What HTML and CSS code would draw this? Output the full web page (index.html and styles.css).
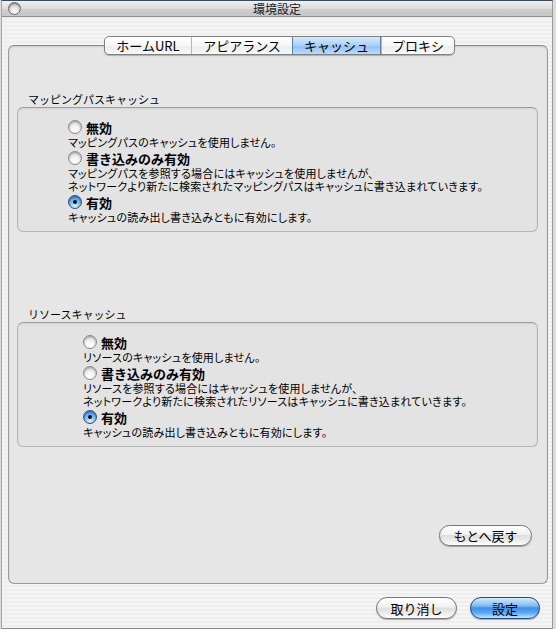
FILE: index.html
```html
<!DOCTYPE html>
<html lang="ja">
<head>
  <meta charset="UTF-8">
  <title>環境設定</title>
  <link rel="stylesheet" href="styles.css">
</head>
<body>
  <div class="window">
    <div class="titlebar">
      <span class="close-btn"></span>
      <span class="title">環境設定</span>
    </div>

    <div class="content">
      <div class="tabs">
        <span class="tab">ホームURL</span>
        <span class="tab">アピアランス</span>
        <span class="tab active">キャッシュ</span>
        <span class="tab">プロキシ</span>
      </div>

      <div class="panel">
        <div class="group">
          <div class="group-label">マッピングパスキャッシュ</div>
          <div class="group-box">
            <div class="options">
              <div class="option"><span class="radio"></span>無効</div>
              <div class="desc">マッピングパスのキャッシュを使用しません。</div>
              <div class="option"><span class="radio"></span>書き込みのみ有効</div>
              <div class="desc">マッピングパスを参照する場合にはキャッシュを使用しませんが、<br>ネットワークより新たに検索されたマッピングパスはキャッシュに書き込まれていきます。</div>
              <div class="option"><span class="radio checked"></span>有効</div>
              <div class="desc">キャッシュの読み出し書き込みともに有効にします。</div>
            </div>
          </div>
        </div>

        <div class="group second">
          <div class="group-label">リソースキャッシュ</div>
          <div class="group-box">
            <div class="options wide">
              <div class="option"><span class="radio"></span>無効</div>
              <div class="desc">リソースのキャッシュを使用しません。</div>
              <div class="option"><span class="radio"></span>書き込みのみ有効</div>
              <div class="desc">リソースを参照する場合にはキャッシュを使用しませんが、<br>ネットワークより新たに検索されたリソースはキャッシュに書き込まれていきます。</div>
              <div class="option"><span class="radio checked"></span>有効</div>
              <div class="desc">キャッシュの読み出し書き込みともに有効にします。</div>
            </div>
          </div>
        </div>

        <div class="panel-foot">
          <button class="btn revert">もとへ戻す</button>
        </div>
      </div>

      <div class="footer">
        <button class="btn cancel">取り消し</button>
        <button class="btn default">設定</button>
      </div>
    </div>
  </div>
</body>
</html>
```

FILE: styles.css
```css
* {
  margin: 0;
  padding: 0;
  box-sizing: border-box;
}

html, body {
  width: 556px;
  height: 629px;
  overflow: hidden;
}

body {
  background: #dcdcdc;
  font-family: "Noto Sans CJK JP", "Noto Sans", sans-serif;
  color: #000;
}

.window {
  width: 552px;
  height: 629px;
  margin-left: 1px;
  border-left: 1px solid #a8a8a8;
  border-right: 1px solid #9a9a9a;
  border-bottom: 1px solid #8c8c8c;
  border-top: 1px solid #3a4a5a;
  background: repeating-linear-gradient(#eeeeee 0, #eeeeee 2px, #f5f5f5 2px, #f5f5f5 4px);
  display: flex;
  flex-direction: column;
}

/* Title bar */
.titlebar {
  height: 16px;
  position: relative;
  display: flex;
  align-items: center;
  justify-content: center;
  background: linear-gradient(#f0f0f0, #dcdcdc 50%, #d0d0d0 51%, #c6c6c6);
  border-bottom: 1px solid #8e8e8e;
}

.close-btn {
  position: absolute;
  left: 6px;
  top: 1px;
  width: 13px;
  height: 13px;
  border-radius: 50%;
  border: 1px solid #6d6d6d;
  background: radial-gradient(circle at 50% 75%, #ffffff 0, #e4e4e4 40%, #a8a8a8 100%);
  box-shadow: inset 0 1px 1px rgba(0, 0, 0, 0.35);
}

.title {
  font-size: 12px;
  line-height: 14px;
  color: #222;
}

.content {
  flex: 1;
  display: flex;
  flex-direction: column;
}

/* Segmented tabs */
.tabs {
  position: relative;
  z-index: 2;
  align-self: flex-start;
  margin: 19px 0 0 102px;
  display: flex;
  height: 19px;
  border: 1px solid #808080;
  border-radius: 5px;
  overflow: hidden;
  box-shadow: 0 1px 1px rgba(0, 0, 0, 0.25);
  background: linear-gradient(#ffffff, #f6f6f6 50%, #ececec 51%, #f8f8f8);
}

.tab {
  font-size: 13px;
  line-height: 17px;
  text-align: center;
  border-left: 1px solid #b5b5b5;
}

.tab:first-child {
  border-left: none;
  width: 86px;
}

.tab:nth-child(2) { width: 101px; }
.tab:nth-child(3) { width: 89px; }
.tab:nth-child(4) { width: 73px; }

.tab.active {
  background: linear-gradient(#d6ebfd, #a9d0f6 50%, #8fc0f2 51%, #b9dcfb);
  border-left-color: #5b7fb0;
  border-right: 1px solid #5b7fb0;
}

/* Panel */
.panel {
  margin: -10px 0 0 6px;
  width: 540px;
  height: 539px;
  border: 1px solid #9a9a9a;
  border-top-color: #8a8a8a;
  border-radius: 6px;
  background: #e6e6e6;
  box-shadow: inset 0 1px 2px rgba(0, 0, 0, 0.12);
  padding: 46px 9px 0 8px;
  display: flex;
  flex-direction: column;
}

.group-label {
  font-size: 11px;
  line-height: 14px;
  padding-left: 11px;
  margin-bottom: 1px;
}

.group.second {
  margin-top: 75px;
}

.group-box {
  border: 1px solid #b6b6b6;
  border-top-color: #9c9c9c;
  border-radius: 6px;
  background: #e3e3e3;
  box-shadow: inset 0 1px 2px rgba(0, 0, 0, 0.08);
  padding: 10px 0 7px 50px;
}

.options.wide {
  padding-left: 15px;
}

.option {
  display: flex;
  align-items: center;
  height: 18px;
  font-size: 13px;
  font-weight: 700;
}

.desc {
  font-size: 11px;
  line-height: 13px;
  letter-spacing: 0.2px;
  font-feature-settings: "palt";
}

/* Aqua radio */
.radio {
  width: 14px;
  height: 14px;
  margin-right: 4px;
  border-radius: 50%;
  border: 1px solid #8a8a8a;
  background: radial-gradient(circle at 50% 85%, #ffffff 0, #f4f4f4 40%, #cfcfcf 100%);
  box-shadow: inset 0 1px 2px rgba(0, 0, 0, 0.3);
  display: flex;
  align-items: center;
  justify-content: center;
}

.radio.checked {
  border-color: #2f4f86;
  background: radial-gradient(circle at 50% 85%, #d9f0ff 0, #7cbcf4 45%, #2f74d0 100%);
}

.radio.checked::after {
  content: "";
  width: 4px;
  height: 4px;
  border-radius: 50%;
  background: #111;
}

/* Buttons */
.panel-foot {
  margin-top: auto;
  margin-bottom: 37px;
  display: flex;
  justify-content: flex-end;
  padding-right: 6px;
}

.btn {
  font-family: inherit;
  font-size: 13px;
  line-height: 19px;
  height: 21px;
  border-radius: 11px;
  border: 1px solid #767676;
  color: #000;
  background: linear-gradient(#ffffff, #f1f1f1 45%, #dedede 50%, #eeeeee 80%, #ffffff);
  box-shadow: 0 1px 1px rgba(0, 0, 0, 0.3);
}

.revert {
  width: 93px;
}

.footer {
  display: flex;
  justify-content: flex-end;
  gap: 13px;
  margin-top: 13px;
  padding-right: 12px;
}

.cancel {
  width: 81px;
  height: 22px;
}

.btn.default {
  width: 70px;
  height: 22px;
  border-color: #24487e;
  background: linear-gradient(#d4ecff, #7fbaf2 40%, #3f8ee8 50%, #5eaaf4 75%, #bfe6ff);
}
```
